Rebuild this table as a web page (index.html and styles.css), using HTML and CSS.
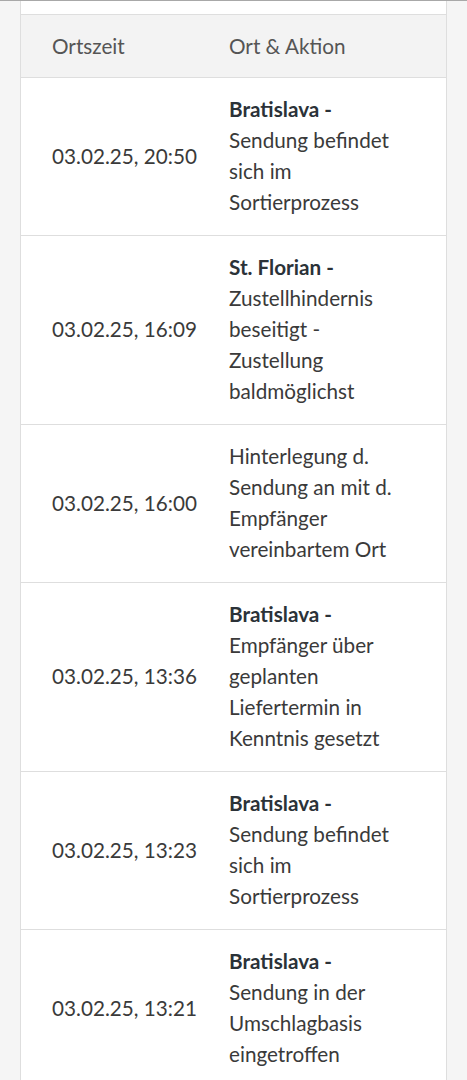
FILE: index.html
```html
<!DOCTYPE html>
<html lang="de">
<head>
<meta charset="utf-8">
<link rel="stylesheet" href="styles.css">
</head>
<body>
<div class="topline"></div>
<div class="page">
  <div class="card">
    <div class="spacer"></div>
    <div class="table">
      <div class="row head">
        <div class="c1">Ortszeit</div>
        <div class="c2">Ort &amp; Aktion</div>
      </div>
      <div class="row">
        <div class="c1">03.02.25, 20:50</div>
        <div class="c2"><b>Bratislava -</b><br>Sendung befindet sich im Sortierprozess</div>
      </div>
      <div class="row">
        <div class="c1">03.02.25, 16:09</div>
        <div class="c2"><b>St. Florian -</b><br>Zustellhindernis beseitigt - Zustellung baldmöglichst</div>
      </div>
      <div class="row">
        <div class="c1">03.02.25, 16:00</div>
        <div class="c2">Hinterlegung d. Sendung an mit d. Empfänger vereinbartem Ort</div>
      </div>
      <div class="row">
        <div class="c1">03.02.25, 13:36</div>
        <div class="c2"><b>Bratislava -</b><br>Empfänger über geplanten Liefertermin in Kenntnis gesetzt</div>
      </div>
      <div class="row">
        <div class="c1">03.02.25, 13:23</div>
        <div class="c2"><b>Bratislava -</b><br>Sendung befindet sich im Sortierprozess</div>
      </div>
      <div class="row">
        <div class="c1">03.02.25, 13:21</div>
        <div class="c2"><b>Bratislava -</b><br>Sendung in der Umschlagbasis eingetroffen</div>
      </div>
    </div>
  </div>
</div>
</body>
</html>
```

FILE: styles.css
```css
html, body {
  margin: 0;
  padding: 0;
  background: #f5f5f5;
  font-family: Lato, "Open Sans", sans-serif;
  color: #3a3a3a;
}
.topline {
  height: 1px;
  background: #a8a8a8;
}
.page {
  padding: 0 20px;
}
.card {
  background: #fff;
  border-left: 1px solid #dedede;
  border-right: 1px solid #dedede;
}
.spacer {
  height: 13px;
  border-bottom: 1px solid #dedede;
}
.row {
  display: grid;
  grid-template-columns: 177px 188px;
  align-items: center;
  padding: 16px 0 17px 31px;
  border-bottom: 1px solid #dedede;
  font-size: 20.7px;
  line-height: 31px;
}
.row.head {
  background: #f3f3f3;
  padding-top: 16px;
  padding-bottom: 15px;
  color: #555;
}
.c2 b {
  font-weight: 700;
  color: #2b3238;
}
```
